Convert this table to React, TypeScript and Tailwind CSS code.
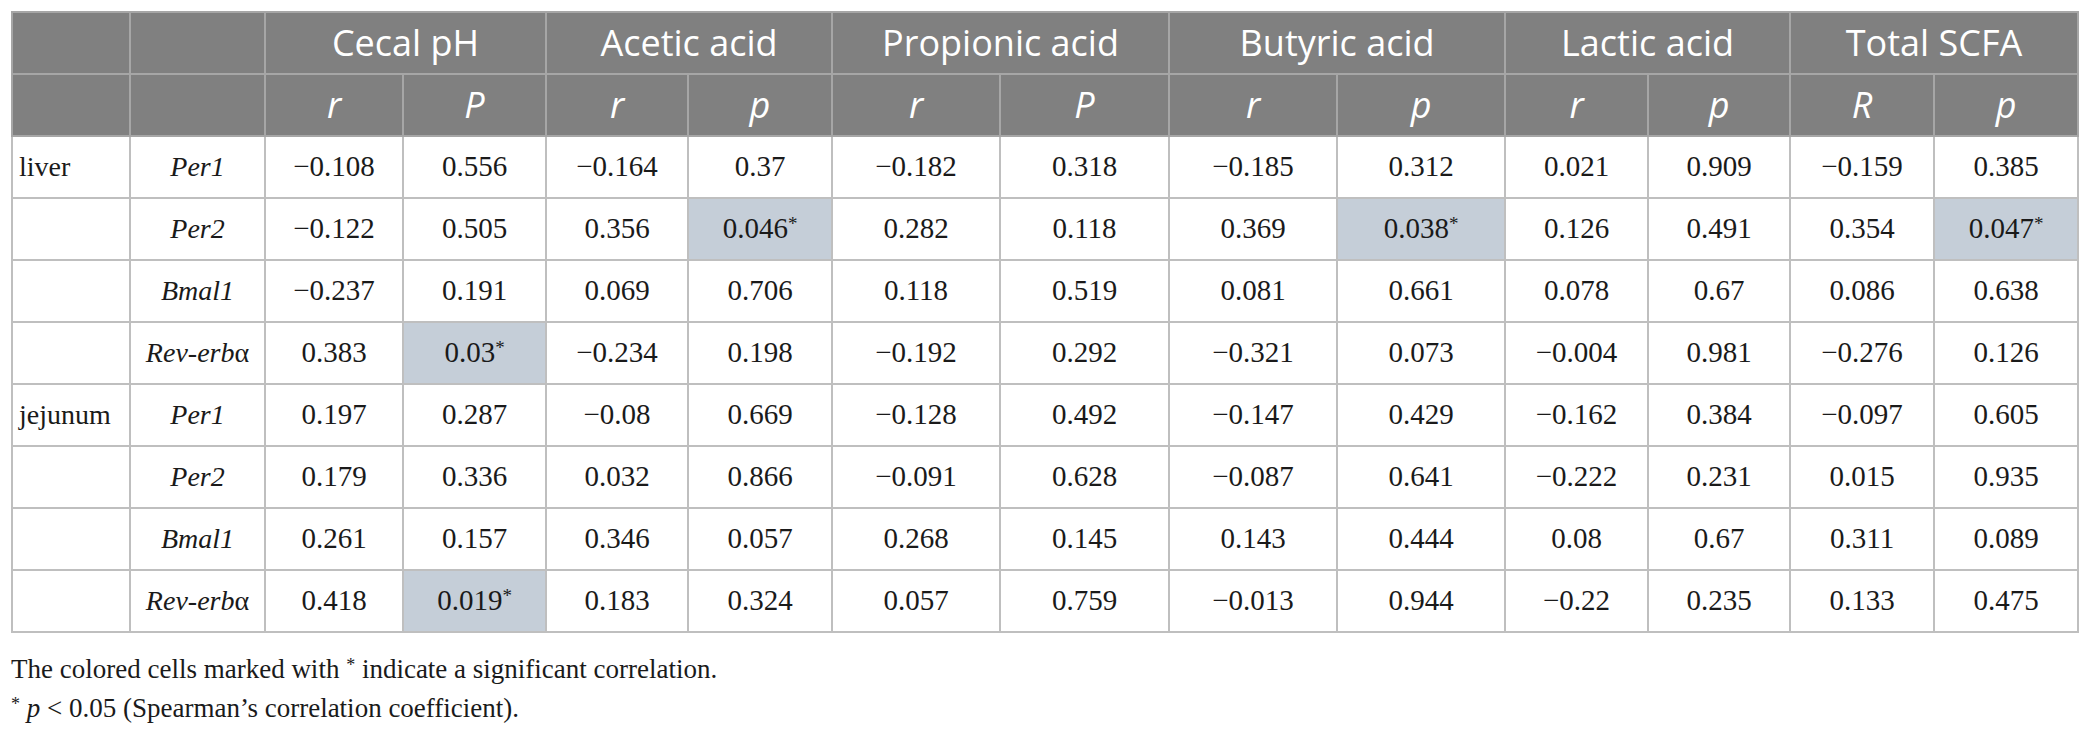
import React from 'react';

type Cell = string;

interface DataRow {
  tissue?: string;
  gene: React.ReactNode;
  values: Cell[];
}

const GROUPS = ['Cecal pH', 'Acetic acid', 'Propionic acid', 'Butyric acid', 'Lactic acid', 'Total SCFA'];
const SUBS = ['r', 'P', 'r', 'p', 'r', 'P', 'r', 'p', 'r', 'p', 'R', 'p'];
const COL_WIDTHS = [118, 135, 138, 143, 142, 144, 168, 169, 168, 168, 143, 142, 144, 144];

const revErb = (
  <>
    <span className="italic">Rev-erb</span>α
  </>
);

const ROWS: DataRow[] = [
  { tissue: 'liver', gene: <span className="italic">Per1</span>, values: ['−0.108', '0.556', '−0.164', '0.37', '−0.182', '0.318', '−0.185', '0.312', '0.021', '0.909', '−0.159', '0.385'] },
  { gene: <span className="italic">Per2</span>, values: ['−0.122', '0.505', '0.356', '0.046*', '0.282', '0.118', '0.369', '0.038*', '0.126', '0.491', '0.354', '0.047*'] },
  { gene: <span className="italic">Bmal1</span>, values: ['−0.237', '0.191', '0.069', '0.706', '0.118', '0.519', '0.081', '0.661', '0.078', '0.67', '0.086', '0.638'] },
  { gene: revErb, values: ['0.383', '0.03*', '−0.234', '0.198', '−0.192', '0.292', '−0.321', '0.073', '−0.004', '0.981', '−0.276', '0.126'] },
  { tissue: 'jejunum', gene: <span className="italic">Per1</span>, values: ['0.197', '0.287', '−0.08', '0.669', '−0.128', '0.492', '−0.147', '0.429', '−0.162', '0.384', '−0.097', '0.605'] },
  { gene: <span className="italic">Per2</span>, values: ['0.179', '0.336', '0.032', '0.866', '−0.091', '0.628', '−0.087', '0.641', '−0.222', '0.231', '0.015', '0.935'] },
  { gene: <span className="italic">Bmal1</span>, values: ['0.261', '0.157', '0.346', '0.057', '0.268', '0.145', '0.143', '0.444', '0.08', '0.67', '0.311', '0.089'] },
  { gene: revErb, values: ['0.418', '0.019*', '0.183', '0.324', '0.057', '0.759', '−0.013', '0.944', '−0.22', '0.235', '0.133', '0.475'] },
];

const ValueCell: React.FC<{ value: string }> = ({ value }) => {
  const marked = value.endsWith('*');
  const text = marked ? value.slice(0, -1) : value;
  return (
    <td className={`border-2 border-[#bfbfbf] text-center text-[29px] ${marked ? 'bg-[#c5ced8]' : 'bg-white'}`}>
      {text}
      {marked && <span className="relative -top-[8px] text-[19px]">*</span>}
    </td>
  );
};

export default function App() {
  return (
    <div className="min-h-screen bg-white px-[11px] pt-[11px] text-[#1a1a1a] font-['Liberation_Serif','Times_New_Roman',serif]">
      <table className="table-fixed border-collapse border-2 border-[#b5b5b5] w-[2066px] font-['Liberation_Serif','Times_New_Roman',serif]">
        <colgroup>
          {COL_WIDTHS.map((w, i) => (
            <col key={i} style={{ width: w }} />
          ))}
        </colgroup>
        <thead className="bg-[#808080] text-white font-['Open_Sans',sans-serif] text-[36px]">
          <tr className="h-[62px]">
            <th className="border-2 border-[#a6a6a6]" />
            <th className="border-2 border-[#a6a6a6]" />
            {GROUPS.map((g) => (
              <th key={g} colSpan={2} className="border-2 border-[#a6a6a6] font-normal text-center">
                {g}
              </th>
            ))}
          </tr>
          <tr className="h-[62px]">
            <th className="border-2 border-[#a6a6a6]" />
            <th className="border-2 border-[#a6a6a6]" />
            {SUBS.map((s, i) => (
              <th key={i} className="border-2 border-[#a6a6a6] font-normal italic text-center">
                {s}
              </th>
            ))}
          </tr>
        </thead>
        <tbody className="text-[28px]">
          {ROWS.map((row, i) => (
            <tr key={i} className="h-[62px]">
              <td className="border-2 border-[#bfbfbf] pl-[6px] text-left">{row.tissue ?? ''}</td>
              <td className="border-2 border-[#bfbfbf] text-center">{row.gene}</td>
              {row.values.map((v, j) => (
                <ValueCell key={j} value={v} />
              ))}
            </tr>
          ))}
        </tbody>
      </table>
      <div className="mt-[18px] text-[27px] leading-[36px] font-['Liberation_Serif','Times_New_Roman',serif]">
        <p>
          The colored cells marked with <span className="relative -top-[7px] text-[18px]">*</span> indicate a significant correlation.
        </p>
        <p>
          <span className="relative -top-[7px] text-[18px]">*</span> <span className="italic">p</span> &lt; 0.05 (Spearman’s correlation coefficient).
        </p>
      </div>
    </div>
  );
}
